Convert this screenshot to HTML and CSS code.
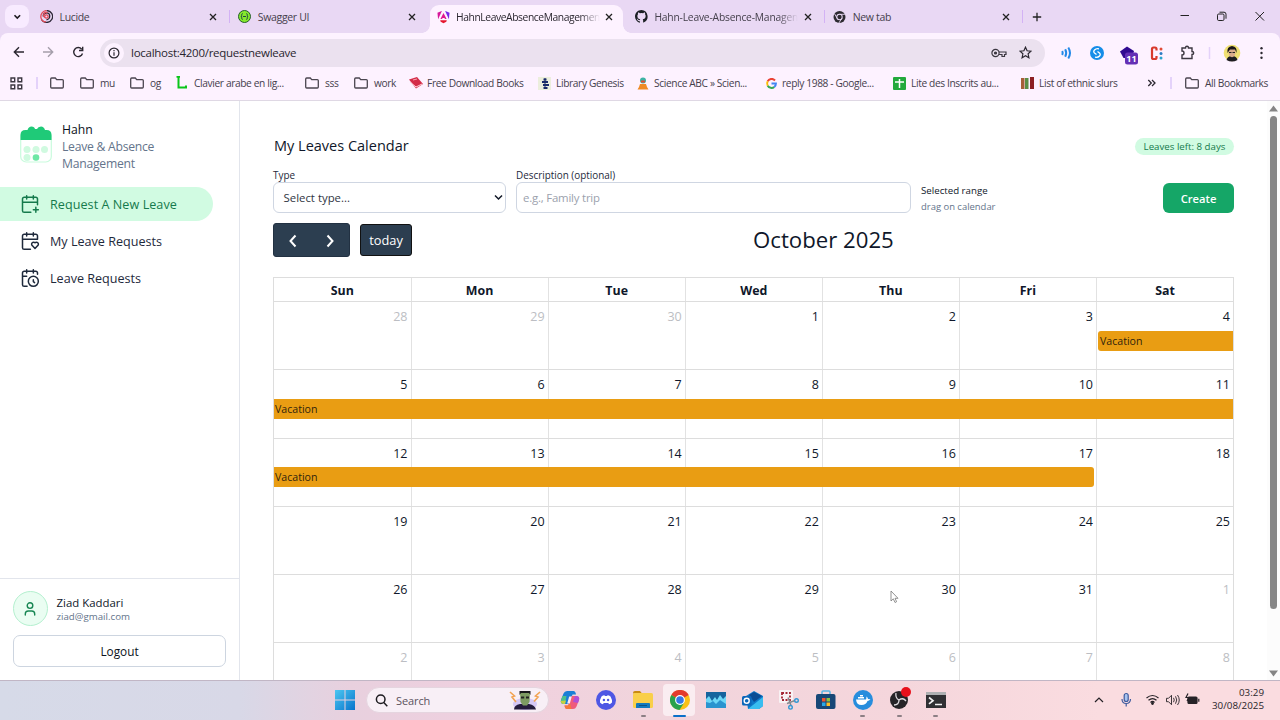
FILE: index.html
```html
<!DOCTYPE html>
<html lang="en">
<head>
<meta charset="utf-8">
<title>HahnLeaveAbsenceManagement</title>
<link rel="stylesheet" href="styles.css">
</head>
<body>
<svg class="defs" width="0" height="0">
  <symbol id="x" viewBox="0 0 8 8"><path d="M1 1l6 6M7 1L1 7" fill="none" stroke="#222" stroke-width="1.3"/></symbol>
  <symbol id="folder" viewBox="0 0 14 12"><path d="M1.7 1h3.600l1.400 1.600h5.600q1 0 1 1V10q0 1-1 1H1.700q-1 0-1-1V2q0-1 1-1z" fill="none" stroke="#4b4650" stroke-width="1.300"/></symbol>
  <symbol id="chrome" viewBox="0 0 20 20"><circle cx="10" cy="10" r="10" fill="#fbc116"/><path d="M10 10L1.300 5A10 10 0 0 1 18.700 5z" fill="#e33b2e"/><path d="M10 10L1.300 5A10 10 0 0 0 9.500 20L14.300 12.500z" fill="#29a24c"/><circle cx="10" cy="10" r="4.900" fill="#fff"/><circle cx="10" cy="10" r="3.800" fill="#3578e5"/></symbol>
</svg>

<header class="tabs">
  <div class="tabsearch"><svg width="24" height="23"><path d="M9.500 10.300l2.800 2.800 2.800-2.800" fill="none" stroke="#1d1b20" stroke-width="1.600"/></svg></div>
  <div class="tab sep"><svg class="fav" width="13" height="13" viewBox="0 0 24 24" fill="none" stroke-width="2.400"><path d="M12 1a11 11 0 1 1-9 17M6 12a6 6 0 0 1 12-1c0 5-4 7-6 7" stroke="#2c2636"/><path d="M12 1A11 11 0 0 0 2 15c1 4 5 7 9 7M9 12a3 3 0 1 1 4 3c-4 0-7-3-6-7 1-3 4-4 7-3" stroke="#e04b59"/></svg><span class="tt">Lucide</span><svg class="cl" width="8" height="8"><use href="#x"/></svg></div>
  <div class="tab"><svg class="fav" width="13" height="13" viewBox="0 0 13 13"><circle cx="6.500" cy="6.500" r="6" fill="#85ea2d" stroke="#245c2b"/><path d="M4.700 3.600q-1 0-1 1v1q0 .9-.8.9.8 0 .8.9v1q0 1 1 1M8.300 3.600q1 0 1 1v1q0 .9.8.9-.8 0-.8.9v1q0 1-1 1M5 6.500h3" fill="none" stroke="#173647" stroke-width=".9"/></svg><span class="tt">Swagger UI</span><svg class="cl" width="8" height="8"><use href="#x"/></svg></div>
  <div class="tab active"><svg class="fav" width="14" height="14" viewBox="0 0 14 14"><path d="M5 .5L.5 2.300l.7 7L5 1z" fill="#d6179a"/><path d="M9 .5l4.500 1.800-.7 7L9 1z" fill="#7a27e8"/><path d="M7 2.600l3.300 6.600H8.600L8 8H6l-.6 1.200H3.700z" fill="#e0158f"/><path d="M3.400 10.500h7.200L10 12.200 7 13.800l-3-1.600z" fill="#e5172f"/></svg><span class="tt long">HahnLeaveAbsenceManagemen</span><svg class="cl" width="8" height="8"><use href="#x"/></svg></div>
  <div class="tab sep"><svg class="fav" width="13" height="13" viewBox="0 0 16 16"><path fill="#1b1f23" d="M8 0C3.58 0 0 3.58 0 8c0 3.54 2.29 6.53 5.47 7.59.4.07.55-.17.55-.38v-1.49C3.8 14.2 3.33 12.55 3.33 12.55c-.36-.92-.89-1.17-.89-1.17-.72-.5.06-.48.06-.48.8.05 1.22.82 1.22.82.7 1.2 1.87.87 2.33.66.07-.52.28-.87.51-1.07-1.78-.2-3.64-.89-3.64-3.95 0-.87.31-1.59.82-2.15-.08-.2-.36-1.02.08-2.12 0 0 .67-.21 2.2.82a7.6 7.6 0 0 1 4 0c1.53-1.04 2.2-.82 2.2-.82.44 1.1.16 1.92.08 2.12.51.56.82 1.27.82 2.15 0 3.07-1.87 3.75-3.65 3.95.29.25.54.73.54 1.48v2.2c0 .21.15.46.55.38A8 8 0 0 0 8 0z"/></svg><span class="tt long git">Hahn-Leave-Absence-Managen</span><svg class="cl" width="8" height="8"><use href="#x"/></svg></div>
  <div class="tab sep"><svg class="fav" width="12" height="12" viewBox="0 0 20 20"><circle cx="10" cy="10" r="10" fill="#2d2a31"/><circle cx="10" cy="10" r="4.500" fill="none" stroke="#e9d8f4" stroke-width="1.700"/><path d="M10 5.500h9M6 12L2 5M14 12l-5 8" stroke="#e9d8f4" stroke-width="1.500"/></svg><span class="tt">New tab</span><svg class="cl" width="8" height="8"><use href="#x"/></svg></div>
  <svg class="plus" width="10" height="10"><path d="M5 .8v8.400M.8 5h8.400" stroke="#222" stroke-width="1.300"/></svg>
  <svg class="win" width="86" height="14" fill="none" stroke="#222"><path d="M0.500 6.500h8.500M75.500 3l8.500 8.500M84 3l-8.500 8.500"/><rect x="37.500" y="5" width="6.500" height="6.500" rx="1.200"/><path d="M39.500 3.200h4.500q2 0 2 2v4.500"/></svg>
</header>

<div class="toolbar">
  <svg class="navs" width="76" height="14" fill="none" stroke="#2b2730" stroke-width="1.400"><path d="M11 7H1.500M6 2.300L1.300 7 6 11.700"/><path d="M30 7h9.500M35 2.300L39.700 7 35 11.700" stroke="#a59eab"/><path d="M69.500 8.500A4.500 4.500 0 1 1 68.700 4.200M69.700 1.800v3.700h-3.700"/></svg>
  <div class="omni">
    <span class="info"><svg width="12" height="12" fill="none" stroke="#2b2730" stroke-width="1.200"><circle cx="6" cy="6" r="4.900"/><path d="M6 5.300v3.500M6 3v1.300"/></svg></span>
    <span class="url">localhost:4200/requestnewleave</span>
    <svg class="key" width="16" height="10" fill="none" stroke="#3b3740" stroke-width="1.200"><circle cx="4.500" cy="5" r="3.600"/><circle cx="4.500" cy="5" r="1" fill="#3b3740"/><path d="M8 4h7v2.500h-1.500v2h-2.500v-2H8"/></svg>
    <svg class="star" width="13" height="13" viewBox="0 0 13 13"><path d="M6.500 1.200l1.600 3.600 3.900.4-2.900 2.600.8 3.900-3.400-2-3.400 2 .8-3.900L1 5.200l3.900-.4z" fill="none" stroke="#2b2730" stroke-width="1.200"/></svg>
  </div>
  <svg class="exts" width="216" height="30" fill="none">
    <g stroke="#2389e8" stroke-width="2"><path d="M15.200 13q1 2 0 4M18.200 11.300q2 3.700 0 7.400M21.300 9.500q3.400 5.500 0 11"/></g>
    <circle cx="50" cy="15" r="7" fill="#168de8"/><path d="M52 10.800q-3-.5-4.500 1.200t0 3l2 1.500M48 19.200q3 .5 4.500-1.200t0-3l-2-1.500" stroke="#fff" stroke-width="1.300"/>
    <path d="M73 13.500l7-5 7 4.500-2 7h-8.500z" fill="#310b91"/><rect x="78" y="14.500" width="13" height="12" rx="2.500" fill="#6430b5"/>
    <text x="84.500" y="23.700" class="badge">11</text>
    <path d="M109.500 12.500V11q0-1.500-1.500-1.500h-1.500q-1.500 0-1.500 1.500v8.500q0 1.500 1.500 1.500h1.500q1.500 0 1.500-1.500V18" stroke="#d83a2c" stroke-width="2.200"/><circle cx="114" cy="11" r="1.500" fill="#e14b36"/><circle cx="114" cy="15.500" r="1.500" fill="#2b7bc4"/><circle cx="114" cy="20" r="1.500" fill="#2aa4cd"/>
    <path d="M135 10h3.500q0-1.700 1.500-1.700t1.500 1.700h3.500v3.500q1.700 0 1.700 1.500t-1.700 1.500v4h-10v-3.500q2 0 2-2t-2-2z" stroke="#3b3740" stroke-width="1.400"/>
    <path d="M162.500 9v12" stroke="#e4d2fa" stroke-width="1.500"/>
    <circle cx="185" cy="15" r="8.300" fill="#efdf72"/><path d="M179.500 22q1-4 5.500-4t5.500 4q-5.500 3-11 0z" fill="#1d1c20"/><ellipse cx="185" cy="14.500" rx="3.500" ry="4.700" fill="#d9ab8b"/><path d="M180.500 15q-1-6.500 4.500-7 5.500.5 4.500 7l-1.500-3.500h-5z" fill="#1b1718"/><path d="M182 14.500h2.500m1 0h2.500" stroke="#222"/>
    <g fill="#2b2730"><circle cx="214.500" cy="10.300" r="1.200"/><circle cx="214.500" cy="15" r="1.200"/><circle cx="214.500" cy="19.700" r="1.200"/></g>
  </svg>
</div>

<nav class="marks">
  <svg width="13" height="13" fill="none" stroke="#3b3740" stroke-width="1.400"><path d="M1 1h3.700v3.700H1zM8 1h3.700v3.700H8zM1 8h3.700v3.700H1zM8 8h3.700v3.700H8z"/></svg>
  <i class="bar"></i>
  <span><svg width="14" height="12"><use href="#folder"/></svg></span>
  <span><svg width="14" height="12"><use href="#folder"/></svg>mu</span>
  <span><svg width="14" height="12"><use href="#folder"/></svg>og</span>
  <span class="t18"><svg width="12" height="14"><path d="M.5.800h3.500M2.500 1v10.500H10V9.500" stroke="#0bc51b" stroke-width="2" fill="none"/></svg>Clavier arabe en lig...</span>
  <span><svg width="14" height="12"><use href="#folder"/></svg>sss</span>
  <span><svg width="14" height="12"><use href="#folder"/></svg>work</span>
  <span class="t18"><svg width="14" height="12"><path d="M0 2.500L8 0l6 7-7 4.500z" fill="#d42c48"/><path d="M1 5l6 5 6-3" stroke="#ffd7de" fill="none"/><path d="M4 3l4-1" stroke="#f5a5b2"/></svg>Free Download Books</span>
  <span class="t18"><svg width="13" height="13"><path fill="#eceedd" d="M0 0h13v13H0z"/><path d="M5.500 2.500h3M4 5h6M5 8h6M5.500 11h4" stroke="#1b2b6b" stroke-width="2"/><path d="M7 1v11" stroke="#1b2b6b"/></svg>Library Genesis</span>
  <span class="t17"><svg width="12" height="13"><circle cx="6" cy="3.500" r="3" fill="#3cb3a4"/><path d="M4 4.500h4" stroke="#e24a32" stroke-width="2"/><path d="M3 7h6l1 3 1.500 2.500h-11L2 10z" fill="#ef8a24"/></svg>Science ABC » Scien...</span>
  <span class="t17"><svg width="11" height="11" viewBox="0 0 11 11" fill="none" stroke-width="2"><path d="M9 2.500A4.400 4.400 0 0 0 1.700 3.300" stroke="#ea4335"/><path d="M1.700 3.300a4.400 4.400 0 0 0 0 4.400" stroke="#fbbc05"/><path d="M1.700 7.700A4.400 4.400 0 0 0 8.300 8.900" stroke="#34a853"/><path d="M8.300 8.900A4.400 4.400 0 0 0 9.900 5.500H5.500" stroke="#4285f4"/></svg>reply 1988 - Google...</span>
  <span class="t18"><svg width="13" height="13"><rect width="13" height="13" rx="1" fill="#22a93c"/><path d="M6.500 2v9M2 5h9" stroke="#fff" stroke-width="1.500"/></svg>Lite des Inscrits au...</span>
  <span class="t19"><svg width="14" height="12"><path fill="#a65f38" d="M1 1h3.500v11H1z"/><path fill="#5a8d45" d="M5 1h3.500v11H5z"/><path fill="#8d2023" d="M10 0h4v12h-4z"/></svg>List of ethnic slurs</span>
  <svg width="9" height="8" fill="none" stroke="#2b2730" stroke-width="1.300"><path d="M1.300 1l3 3-3 3M5 1l3 3-3 3"/></svg>
  <i class="bar"></i>
  <span><svg width="14" height="12"><use href="#folder"/></svg>All Bookmarks</span>
</nav>

<div class="page">
  <aside>
    <div class="brand">
      <svg width="32" height="37" viewBox="0 0 32 37"><rect x=".7" y="5" width="30.600" height="31" rx="5.500" fill="#fff" stroke="#c9fbdd" stroke-width="1.200"/><path d="M.5 14V9q0-5 5-5h2q1-3.500 4-3.500T15 3h2q1-2.500 4-2.500t4 3.500h1.500q5 0 5 5v5z" fill="#1fca78"/><g fill="#d0fae0"><circle cx="7" cy="23.500" r="3.500"/><circle cx="16" cy="23.500" r="3.500"/><circle cx="24.500" cy="23.500" r="3.500"/><circle cx="7" cy="31.500" r="3.500"/></g><circle cx="16" cy="31.500" r="3.300" fill="#6ee7a5"/></svg>
      <div><b>Hahn</b><p>Leave &amp; Absence<br>Management</p></div>
    </div>
    <a class="item on"><svg class="ic" viewBox="0 0 24 24"><path d="M8 2v4M16 2v4M21 13V6a2 2 0 0 0-2-2H5a2 2 0 0 0-2 2v14a2 2 0 0 0 2 2h8M3 10h18M16 19h6M19 16v6"/></svg><span>Request A New Leave</span></a>
    <a class="item"><svg class="ic" viewBox="0 0 24 24"><path d="M3 10h18V6a2 2 0 0 0-2-2H5a2 2 0 0 0-2 2v14a2 2 0 0 0 2 2h7.500M8 2v4M16 2v4M21.300 17.500a2.400 2.400 0 0 0 .1-3.400c-.9-1-2.500-1-3.400 0-.9-1-2.500-1-3.400 0a2.400 2.400 0 0 0 .1 3.400L18 21z"/></svg><span>My Leave Requests</span></a>
    <a class="item"><svg class="ic" viewBox="0 0 24 24"><path d="M21 7.500V6a2 2 0 0 0-2-2H5a2 2 0 0 0-2 2v14a2 2 0 0 0 2 2h3.500M16 2v4M8 2v4M3 10h5M17.500 17.500L16 16.300V14"/><circle cx="16" cy="16" r="6"/></svg><span>Leave Requests</span></a>
    <div class="foot">
      <div class="user"><i><svg width="14" height="16" fill="none" stroke="#178653" stroke-width="1.400" stroke-linecap="round"><circle cx="7" cy="4.600" r="2.800"/><path d="M2.300 14V13q0-3 3-3h3.400q3 0 3 3v1"/></svg></i><div><b>Ziad Kaddari</b><small>ziad@gmail.com</small></div></div>
      <button class="logout">Logout</button>
    </div>
  </aside>
  <main>
    <div class="head"><h1>My Leaves Calendar</h1><em>Leaves left: 8 days</em></div>
    <div class="form">
      <div class="f1"><label>Type</label><div class="field">Select type...<svg width="9" height="7"><path d="M1 1.500l3.500 3.500L8 1.500" fill="none" stroke="#111827" stroke-width="1.500"/></svg></div></div>
      <div class="f2"><label>Description (optional)</label><div class="field ph">e.g., Family trip</div></div>
      <div class="range"><b>Selected range</b><small>drag on calendar</small></div>
      <button class="create">Create</button>
    </div>
    <div class="calbar">
      <div class="prev"><svg width="77" height="34" fill="none" stroke="#fff" stroke-width="2"><path d="M22.500 12.500l-5 5.500 5 5.500M54.500 12.500l5 5.500-5 5.500"/></svg></div>
      <div class="today">today</div>
      <h2>October 2025</h2>
    </div>
    <div class="cal">
      <div class="week dow"><div>Sun</div><div>Mon</div><div>Tue</div><div>Wed</div><div>Thu</div><div>Fri</div><div>Sat</div></div>
      <div class="week"><div class="o">28</div><div class="o">29</div><div class="o">30</div><div>1</div><div>2</div><div>3</div><div>4</div><p class="ev e1">Vacation</p></div>
      <div class="week tall"><div>5</div><div>6</div><div>7</div><div>8</div><div>9</div><div>10</div><div>11</div><p class="ev e2">Vacation</p></div>
      <div class="week"><div>12</div><div>13</div><div>14</div><div>15</div><div>16</div><div>17</div><div>18</div><p class="ev e3">Vacation</p></div>
      <div class="week"><div>19</div><div>20</div><div>21</div><div>22</div><div>23</div><div>24</div><div>25</div></div>
      <div class="week"><div>26</div><div>27</div><div>28</div><div>29</div><div>30</div><div>31</div><div class="o">1</div></div>
      <div class="week"><div class="o">2</div><div class="o">3</div><div class="o">4</div><div class="o">5</div><div class="o">6</div><div class="o">7</div><div class="o">8</div></div>
    </div>
  </main>
  <div class="scroll"><svg width="9" height="7"><path d="M4.500 .5L9 6.500H0z" fill="#858585"/></svg><i></i><svg width="9" height="7"><path d="M4.500 6.500L0 .5h9z" fill="#858585"/></svg></div>
</div>

<footer>
  <svg class="start" width="20" height="20"><defs><linearGradient id="w" x2="1" y2="1"><stop stop-color="#4cc7f1"/><stop offset="1" stop-color="#0874cc"/></linearGradient></defs><path fill="url(#w)" d="M0 0h9.500v9.500H0zM10.500 0H20v9.500h-9.500zM0 10.500h9.500V20H0zM10.500 10.500H20V20h-9.500z"/></svg>
  <div class="search"><svg width="13" height="13" fill="none" stroke="#1d1b20" stroke-width="1.500"><circle cx="5.700" cy="5.200" r="4.300"/><path d="M8.800 8.500l3.500 3.700"/></svg><span>Search</span>
    <svg class="frank" width="32" height="20"><ellipse cx="16" cy="14" rx="12" ry="6" fill="#d6c8f6"/><path d="M5 19.500q0-4.500 6-5.500h9q6 1 7 5.500z" fill="#251b3c"/><path d="M11 3h10l-.5 9-2.500 3.500h-4L11.500 12z" fill="#7d9b62"/><path d="M10.500 5V1h11v4l-1.500-2h-8z" fill="#18181c"/><path d="M12 6.500h3.200v2H12zM17 6.500h3v2h-3z" fill="#222"/><path d="M1 2l4.500 4-2.500 1 4 5M31 2l-4.500 4 2.500 1-4 4.500" fill="none" stroke="#f2a352" stroke-width="1.600"/></svg>
  </div>
  <div class="apps">
    <span><svg width="20" height="20"><path d="M7 1h6.500q2 0 2.500 3.500h-3.500L9 14H4Q0 14 1 10l2.500-6.500Q4.500 1 7 1z" fill="#1b7fd6"/><path d="M2.500 6h4L5 14H4Q0 14 1 10z" fill="#4fc08a"/><path d="M.8 11L6 10.500 5 14H4q-3 0-3.200-3z" fill="#c6d23f"/><path d="M13 19H7q-2 0-2.500-3.500H8L11.500 6H16q4 0 3 4l-2.500 6.500Q15.500 19 13 19z" fill="#ef5a7c"/><path d="M15 6h1q4 0 3 4l-1 3-5-1z" fill="#b04fd8"/><path d="M7 19q-2 0-2.500-3.500H8l2-2.500 1.500 6z" fill="#f5793a"/><path d="M9.200 6.500h2.600l-2 7H7.200z" fill="#fbe9f2"/></svg></span>
    <span><svg width="20" height="20"><circle cx="10" cy="10" r="10" fill="#4e57e4"/><path d="M5.500 6.500q1.500-1.200 3-1.300l.4.800h2.200l.4-.8q1.500.1 3 1.300 1.800 3 1.500 6-1.500 1.500-3 1.700l-.7-1.200H7.700L7 14.200Q5.500 14 4 12.500q-.3-3 1.500-6z" fill="#fff"/><circle cx="7.900" cy="10" r="1.200" fill="#4e57e4"/><circle cx="12.100" cy="10" r="1.200" fill="#4e57e4"/></svg></span>
    <span class="run"><svg width="20" height="20"><path d="M0 3q0-2 2-2h5l2 2.500H0z" fill="#c98b12"/><rect y="3" width="20" height="15" rx="1.500" fill="#f9cf4a"/><path d="M3 18v-4q0-1 1-1h12q1 0 1 1v4z" fill="#1379bd"/><path d="M6 15.500h8" stroke="#0b5289"/></svg></span>
    <span class="run cur"><svg width="20" height="20"><use href="#chrome"/></svg></span>
    <span><svg width="20" height="16"><path fill="#16649e" d="M0 0h20v16H0z"/><path d="M0 7l3-3 3 5 3-4 2 3 3-5 3 4 3-3v12H0z" fill="#6dd8f7"/><path d="M0 10l4 1 3-2 3 3 4-4 6 4v4H0z" fill="#2a94cf"/></svg></span>
    <span><svg width="21" height="19"><path d="M4 5l8-5 9 5v10l-4 3H6z" fill="#0f78c9"/><path d="M7 4l5-3 8 4-8 6z" fill="#0a4c94"/><path d="M21 6v9l-4 3H6l15-12z" fill="#38bdf0"/><rect y="5" width="9.500" height="9.500" rx="1.500" fill="#0c67ba"/><circle cx="4.700" cy="9.700" r="2.500" fill="none" stroke="#fff" stroke-width="1.400"/></svg></span>
    <span><svg width="20" height="20"><rect x="0" width="14" height="13" rx="1" fill="#f8f2f4"/><path d="M3 3h8v7H3z" fill="none" stroke="#a42735" stroke-width="1.800" stroke-dasharray="2 1.500"/><path d="M9 7.500l3 8M16 10.500l-8 3" stroke="#85898f" stroke-width="1.500"/><circle cx="11.500" cy="17.300" r="1.800" fill="none" stroke="#3298d3" stroke-width="1.400"/><circle cx="17.500" cy="10.500" r="1.800" fill="none" stroke="#3298d3" stroke-width="1.400"/></svg></span>
    <span><svg width="20" height="20"><path d="M6 5V2q0-1 1-1h6q1 0 1 1v3" fill="none" stroke="#58b7e5" stroke-width="1.500"/><rect y="4" width="19.500" height="15" rx="2" fill="#174777"/><path fill="#ef5330" d="M6 8h3.500v3.500H6z"/><path fill="#8bc343" d="M10.500 8H14v3.500h-3.500z"/><path fill="#28a7e8" d="M6 12.500h3.500V16H6z"/><path fill="#fbbd26" d="M10.500 12.500H14V16h-3.500z"/></svg></span>
    <span class="run"><svg width="20" height="20"><circle cx="10" cy="10" r="10" fill="#278ddd"/><path d="M3 9.500h10q1-2 0-3 2 .5 2 2.500l2.500.3q-1.500 1.700-3 1.700-1.500 4-6 4-5 0-5.500-5.500z" fill="#fff"/><path d="M5 7.800h6M7 5.800h3" stroke="#fff" stroke-width="1.500"/></svg></span>
    <span class="run"><svg width="24" height="22" class="obs"><circle cx="10" cy="13" r="9" fill="#262427"/><g fill="none" stroke="#dfdce0" stroke-width="1.300"><path d="M10 13q-4-2-3-7M10 13q4-3 7 1M10 13q0 5-5 5"/></g><circle cx="17" cy="5" r="5" fill="#e8101b"/></svg></span>
    <span class="run"><svg width="20" height="16"><path d="M0 0h20v16H0z" fill="#303033"/><path d="M0 0h20v3H0z" fill="#aeb0b2"/><path d="M3 5.500l4 3.200-4 3.200M9 12.500h7" fill="none" stroke="#f3f3f3" stroke-width="1.700"/></svg></span>
  </div>
  <svg class="tray" width="110" height="20" fill="none" stroke="#252126" stroke-width="1.200"><path d="M1 12l4-4 4 4"/><g stroke="#3e5b9e"><rect x="30.200" y="3.500" width="4" height="8" rx="2" fill="#a9c4ef"/><path d="M28 9q0 4.500 4.200 4.500T36.500 9M32.200 13.500V16.500"/></g><path d="M52.500 8q6-5 12 0M54.500 10.300q4-3.500 8 0M56.500 12.500q2-2 4 0"/><circle cx="58.500" cy="13.500" r=".8" fill="#252126"/><path d="M72.500 8.300h2l3-3v9.400l-3-3h-2zM79.500 7.800q1.500 2.200 0 4.400M81.500 6.300q2.500 3.700 0 7.400M83.500 5q3.500 5 0 10" stroke-width=".9"/><rect x="94" y="7" width="9" height="6.500" rx="1" fill="#252126"/><path d="M104.800 8.800v3M94 3.500l-2 4h3l-2 3.500"/></svg>
  <div class="clock">03:29<br>30/08/2025</div>
</footer>
<svg class="cursor" width="9" height="14"><path d="M1 1v10l2.300-2.200 1.700 3.700 1.600-.8L5 8.300h3z" fill="#fff" stroke="#777" stroke-width=".8"/></svg>
</body>
</html>
```
FILE: styles.css
```css
* { box-sizing: border-box; }
body { margin: 0; width: 1280px; height: 720px; overflow: hidden; display: flex; flex-direction: column; font-family: "Open Sans", "Noto Sans", sans-serif; color: #0f172a; background: #fff; }
svg { flex: none; display: block; }
p, h1, h2 { margin: 0; }
.defs { position: absolute; }

.tabs { height: 33px; flex: none; display: flex; background: #e9d8f4; padding-left: 5px; font-size: 10.500px; color: #45404c; box-shadow: 0 8px 0 #e9d8f4; }
.tabsearch { width: 24px; height: 23px; margin: 5px 2px 0 0; background: #f8ebff; border-radius: 8px; }
.tab { width: 198.300px; height: 33px; display: flex; align-items: center; padding: 0 12px 0 9px; position: relative; }
.tab .fav { margin-right: 6.500px; width: 13px; }
.tt { flex: 1; white-space: nowrap; letter-spacing: -.33px; }
.tt.long { flex: none; font-size: 10.300px; letter-spacing: -.42px; -webkit-mask-image: linear-gradient(90deg, #000 124px, transparent 144px); mask-image: linear-gradient(90deg, #000 124px, transparent 144px); }
.tt.git { letter-spacing: -.2px; }
.cl { margin-left: auto; }
.tab.active { padding-right: 13px; color: #2b2730; }
.tab.sep::after { content: ""; position: absolute; right: -1px; top: 10px; width: 1.500px; height: 13px; background: #d3b2f5; }
.tab.active::before { content: ""; position: absolute; z-index: 0; left: 2.500px; right: 2.500px; top: 5px; bottom: 0; background: #fdf2ff; border-radius: 9px 9px 0 0; }
.tab.active::after { content: ""; position: absolute; left: -5.500px; right: -5.500px; bottom: 0; height: 8px; background: radial-gradient(circle at 0 0, transparent 7.500px, #fdf2ff 8px) left / 8px 8px no-repeat, radial-gradient(circle at 100% 0, transparent 7.500px, #fdf2ff 8px) right / 8px 8px no-repeat; }
.tab.active > * { position: relative; }
.plus { margin: 12px 0 0 10px; }
.win { margin: 9px 14px 0 auto; }

.toolbar { height: 39px; flex: none; display: flex; align-items: center; background: #fdf2ff; padding-left: 13px; border-radius: 8px 8px 0 0; }
.navs { margin-bottom: 1px; }
.omni { width: 945px; height: 28px; margin-left: 11px; border-radius: 14px; background: #ebe1ef; display: flex; align-items: center; padding-left: 4px; }
.info { width: 20px; height: 20px; border-radius: 50%; background: #fdf2ff; display: grid; place-items: center; }
.url { margin-left: 7px; font-size: 11.500px; letter-spacing: -.27px; color: #29252e; flex: 1; }
.star { margin: 0 13.500px 0 12px; }
.exts { margin-left: 2px; overflow: visible; }
.badge { fill: #fff; font-size: 9px; font-weight: 700; text-anchor: middle; }

.marks { height: 29px; flex: none; display: grid; grid-template-columns: 26px 14px 30px 50px 46px 129px 49px 55px 129px 99px 128px 128px 127px 127px 23px 15px 1fr; align-items: center; padding: 0 0 6px 10px; background: #fdf2ff; border-bottom: 1px solid #dfd8e4; font-size: 10.200px; color: #45404c; white-space: nowrap; }
.marks span { display: flex; align-items: center; gap: 6px; letter-spacing: -.37px; }
.marks .t18 svg { width: 14px; margin-right: -2px; }
.marks .t17 svg { width: 13px; margin-right: -2px; }
.marks .t19 svg { margin-right: -1px; }
.bar { width: 1.500px; height: 12px; background: #e4d2fa; }

.page { height: 579px; flex: none; display: flex; overflow: hidden; }
aside { width: 240px; border-right: 1px solid #e2e5ec; display: flex; flex-direction: column; }
.brand { display: flex; padding: 21px 0 0 20px; gap: 10px; height: 86px; font-size: 12.200px; line-height: 16.800px; color: #64748b; letter-spacing: -.26px; }
.brand svg { margin-top: 4px; }
.brand b { display: block; font-weight: 500; color: #0b1220; letter-spacing: 0; }
.item { width: 213px; height: 33.500px; margin-bottom: 3.400px; display: flex; align-items: center; gap: 10px; padding-left: 20px; font-size: 12.600px; border-radius: 0 17px 17px 0; color: #1e293b; }
.item span { margin-top: 1px; }
.item.on { background: #d1fbe2; color: #157a4c; letter-spacing: .05px; }
.ic { width: 20px; height: 20px; fill: none; stroke: currentColor; stroke-width: 1.800; stroke-linecap: round; stroke-linejoin: round; }
.foot { margin-top: auto; height: 102px; border-top: 1px solid #e2e5ec; padding: 12px 13px 0; }
.user { display: flex; gap: 9px; height: 35px; align-items: center; margin-left: -.5px; }
.user i { width: 35px; height: 35px; border: 1px solid #b4f0cf; background: #eafdf2; border-radius: 50%; display: grid; place-items: center; }
.user b { display: block; font-size: 11.400px; font-weight: 500; line-height: 15px; margin-top: 2px; }
.user small { display: block; font-size: 9.700px; line-height: 14px; color: #64748b; }
button { font-family: inherit; }
.logout { display: block; width: 213px; height: 32px; margin-top: 9px; background: #fff; border: 1px solid #cdd5e0; border-radius: 7px; font-size: 11.800px; font-weight: 500; color: #0b1220; }

main { width: 1027px; padding: 37px 33px 0 33px; overflow: hidden; }
.head { display: flex; justify-content: space-between; height: 31px; }
h1 { margin-left: 1px; font-size: 14.500px; font-weight: 500; line-height: 16px; }
em { font-style: normal; width: 99px; height: 17px; border-radius: 9px; background: #d1fbe2; color: #157a4c; text-align: center; font-size: 9.700px; line-height: 17px; font-weight: 500; }
.form { display: flex; height: 44px; }
label { display: block; font-size: 9.900px; line-height: 12px; height: 13px; font-weight: 500; color: #1e293b; }
.field { height: 31px; border: 1px solid #cfd6e2; border-radius: 6px; display: flex; align-items: center; justify-content: space-between; padding: 0 2px 0 9.500px; font-size: 11.400px; color: #30363f; }
.ph { color: #9ba1ad; padding-left: 6px; letter-spacing: -.2px; }
.f1 { width: 233px; }
.f2 { width: 395px; margin-left: 10px; }
.range { margin: 14px 0 0 10px; }
.range b, .range small { display: block; font-size: 9.700px; line-height: 15.500px; font-weight: 500; }
.range small { font-weight: 400; font-size: 9.450px; color: #64748b; }
.create { margin: 14px 0 0 auto; width: 71px; height: 30px; border: 0; border-radius: 6px; background: #15a667; color: #fff; font-size: 11.200px; font-weight: 600; }
.calbar { display: flex; height: 64px; padding-top: 10px; }
.prev, .today { background: #2c3e50; border-radius: 3px; color: #fff; }
.prev { width: 77px; height: 34px; border: 1px solid #223142; }
.prev svg { margin: -1px; }
.today { width: 52px; height: 32px; margin: 1px 0 0 10px; border: 1px solid #111; font-size: 12.800px; line-height: 31px; text-align: center; }
h2 { margin-left: 341px; font-size: 22.200px; line-height: 34.500px; font-weight: 400; white-space: nowrap; }
.cal { width: 961px; border: 1px solid #ddd; border-bottom: 0; }
.week { display: grid; grid-template-columns: 137.500px repeat(5, 137.100px) 136px; height: 68px; border-bottom: 1px solid #ddd; }
.week.tall { height: 69px; }
.week > div { grid-row: 1; border-right: 1px solid #e2e2e2; font-size: 12.500px; line-height: 17px; padding: 6px 3px 0 0; text-align: right; }
.week > div:nth-child(1) { grid-column: 1; }
.week > div:nth-child(2) { grid-column: 2; }
.week > div:nth-child(3) { grid-column: 3; }
.week > div:nth-child(4) { grid-column: 4; }
.week > div:nth-child(5) { grid-column: 5; }
.week > div:nth-child(6) { grid-column: 6; }
.week > div:nth-child(7) { grid-column: 7; border-right: 0; }
.week > .o { color: #bcbec3; }
.week.dow { height: 24px; }
.week.dow > div { text-align: center; padding: 4px 0 0; font-weight: 700; font-size: 12.400px; }
.week > .ev { grid-row: 1; z-index: 1; height: 20px; margin-top: 29px; background: #e99d13; border-radius: 3px; font-size: 10.600px; line-height: 20px; padding-left: 2px; color: #30240d; }
.week > .e1 { grid-column: 7; margin-left: 1px; border-radius: 3px 0 0 3px; }
.week > .e2 { grid-column: 1 / 8; border-radius: 0; padding-left: 1px; }
.week > .e3 { grid-column: 1 / 7; margin-top: 28px; margin-right: 3px; border-radius: 0 3px 3px 0; padding-left: 1px; }
.scroll { width: 13px; padding: 4px 0 3px 2px; background: #fcfcfc; display: flex; flex-direction: column; }
.scroll i { width: 7px; height: 493px; margin: 4px 0 auto 1px; border-radius: 4px; background: #868686; }

footer { height: 40px; flex: none; display: flex; border-top: 1px solid #c1b6c5; background: linear-gradient(90deg, #d6dae8 0, #d8d8e7 240px, #e8d0de 350px, #efd0df 480px, #f1d4dc 650px, #f5d6dc 900px, #fadce0 1100px); padding-left: 335px; }
.start { margin-top: 9px; }
.search { width: 183px; height: 26px; margin: 6px 3px 0 11px; background: #f8eff6; border: 1px solid #e5d5df; border-radius: 13px; display: flex; align-items: center; padding-left: 8px; gap: 8px; font-size: 11px; color: #5b525d; }
.search span { letter-spacing: -.1px; }
.frank { margin-left: auto; margin-right: 7px; }
.apps { display: flex; margin-left: -.5px; }
.apps span { width: 36.600px; height: 38px; display: grid; place-items: center; position: relative; }
.apps .cur::before { content: ""; position: absolute; left: 2px; top: 3px; width: 32px; height: 32px; border-radius: 4px; background: #faedf1; }
.apps svg { position: relative; }
.run::after { content: ""; position: absolute; bottom: 2px; left: 16px; width: 5px; height: 2.500px; border-radius: 2px; background: #8c7f85; }
.run.cur::after { left: 12px; width: 13px; background: #0b70c9; }
.apps .obs { margin: -5px 0 0 4px; }
.tray { margin: 9px 0 0 auto; overflow: visible; }
.clock { width: 60px; margin-right: 16px; padding-top: 5px; font-size: 9.800px; line-height: 13.300px; text-align: right; color: #29252a; }
.cursor { position: absolute; left: 890px; top: 590px; }
```
